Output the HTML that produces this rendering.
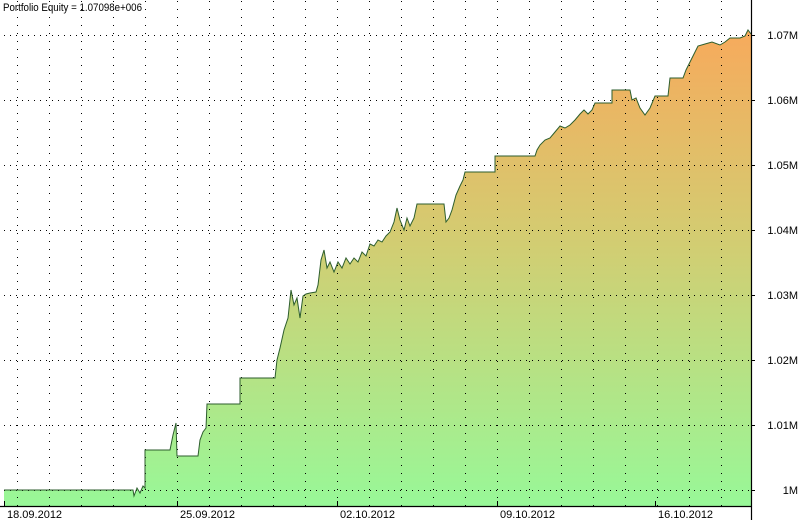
<!DOCTYPE html>
<html><head><style>
html,body{margin:0;padding:0;background:#fff;}
svg{display:block;font-family:"Liberation Sans",sans-serif;}
</style></head><body>
<svg width="800" height="520" viewBox="0 0 800 520">
<defs>
<linearGradient id="g" x1="0" y1="30" x2="0" y2="506" gradientUnits="userSpaceOnUse">
<stop offset="0" stop-color="#f7aa5c"/>
<stop offset="0.45" stop-color="#d2cd72"/>
<stop offset="1" stop-color="#98f898"/>
</linearGradient>
</defs>
<rect width="800" height="520" fill="#fff"/>
<path d="M4,490 L133,490 L134,496 L137,488 L140,493 L143,486 L145,488 L145,450 L170,450 L173,435 L176,423 L177,456 L198,456 L200,440 L203,432 L206,428 L207,404 L240,404 L240,378 L275,378 L277,360 L280,348 L284,330 L288,318 L291,290 L294,305 L297,298 L300,318 L303,296 L306,294 L310,293 L316,292 L318,285 L321,260 L324,250 L327,268 L330,262 L334,272 L338,262 L342,268 L346,258 L350,264 L354,258 L358,262 L362,252 L366,256 L370,244 L374,246 L378,240 L382,242 L386,236 L390,232 L394,222 L397,208 L400,220 L404,230 L407,218 L410,226 L414,218 L417,204 L444,204 L446,222 L449,218 L452,210 L456,195 L460,186 L463,180 L465,172 L495,172 L495,156 L535,156 L537,150 L540,145 L545,140 L550,138 L555,132 L560,126 L565,128 L570,125 L575,120 L580,114 L584,110 L588,114 L592,110 L595,103 L612,103 L612,90 L630,90 L632,100 L636,98 L640,108 L645,115 L650,108 L655,96 L668,96 L670,78 L683,78 L686,70 L690,62 L698,46 L705,44 L712,42 L720,45 L725,42 L730,38 L736,38 L740,38 L745,36 L748,30 L751,34 L751,506 L4,506 Z" fill="url(#g)"/>
<g stroke="#000" stroke-width="1" stroke-dasharray="1,7" fill="none">
<path d="M17.5,0V506M49.5,0V506M81.5,0V506M113.5,0V506M145.5,0V506M177.5,0V506M209.5,0V506M241.5,0V506M273.5,0V506M305.5,0V506M337.5,0V506M369.5,0V506M401.5,0V506M433.5,0V506M465.5,0V506M497.5,0V506M529.5,0V506M561.5,0V506M593.5,0V506M625.5,0V506M657.5,0V506M689.5,0V506M721.5,0V506" stroke-dashoffset="-1"/>
</g>
<g stroke="#000" stroke-width="1" stroke-dasharray="1,5" fill="none">
<path d="M4,35.5H751M4,100.5H751M4,165.5H751M4,230.5H751M4,295.5H751M4,360.5H751M4,425.5H751M4,490.5H751"/>
</g>
<path d="M4,490 L133,490 L134,496 L137,488 L140,493 L143,486 L145,488 L145,450 L170,450 L173,435 L176,423 L177,456 L198,456 L200,440 L203,432 L206,428 L207,404 L240,404 L240,378 L275,378 L277,360 L280,348 L284,330 L288,318 L291,290 L294,305 L297,298 L300,318 L303,296 L306,294 L310,293 L316,292 L318,285 L321,260 L324,250 L327,268 L330,262 L334,272 L338,262 L342,268 L346,258 L350,264 L354,258 L358,262 L362,252 L366,256 L370,244 L374,246 L378,240 L382,242 L386,236 L390,232 L394,222 L397,208 L400,220 L404,230 L407,218 L410,226 L414,218 L417,204 L444,204 L446,222 L449,218 L452,210 L456,195 L460,186 L463,180 L465,172 L495,172 L495,156 L535,156 L537,150 L540,145 L545,140 L550,138 L555,132 L560,126 L565,128 L570,125 L575,120 L580,114 L584,110 L588,114 L592,110 L595,103 L612,103 L612,90 L630,90 L632,100 L636,98 L640,108 L645,115 L650,108 L655,96 L668,96 L670,78 L683,78 L686,70 L690,62 L698,46 L705,44 L712,42 L720,45 L725,42 L730,38 L736,38 L740,38 L745,36 L748,30 L751,34" fill="none" stroke="#2d5e2d" stroke-width="1"/>
<path d="M0,506.5H752M751.5,0V520" stroke="#000" stroke-width="1.2"/>
<g stroke="#000"><path d="M751,35.5h4M751,100.5h4M751,165.5h4M751,230.5h4M751,295.5h4M751,360.5h4M751,425.5h4M751,490.5h4"/>
<path d="M4.5,506v-5M177.5,506v-5M337.5,506v-5M497.5,506v-5M655.5,506v-5"/></g>
<g font-size="11" fill="#000" text-anchor="end">
<text x="798" y="39">1.07M</text><text x="798" y="104">1.06M</text><text x="798" y="169">1.05M</text><text x="798" y="234">1.04M</text><text x="798" y="299">1.03M</text><text x="798" y="364">1.02M</text><text x="798" y="429">1.01M</text><text x="798" y="494">1M</text>
</g>
<g font-size="11" fill="#000">
<text x="7" y="518">18.09.2012</text><text x="180" y="518">25.09.2012</text><text x="340" y="518">02.10.2012</text><text x="500" y="518">09.10.2012</text><text x="658" y="518">16.10.2012</text>
<text x="3" y="11" textLength="139" lengthAdjust="spacingAndGlyphs">Portfolio Equity = 1.07098e+006</text>
</g>
</svg>
</body></html>
